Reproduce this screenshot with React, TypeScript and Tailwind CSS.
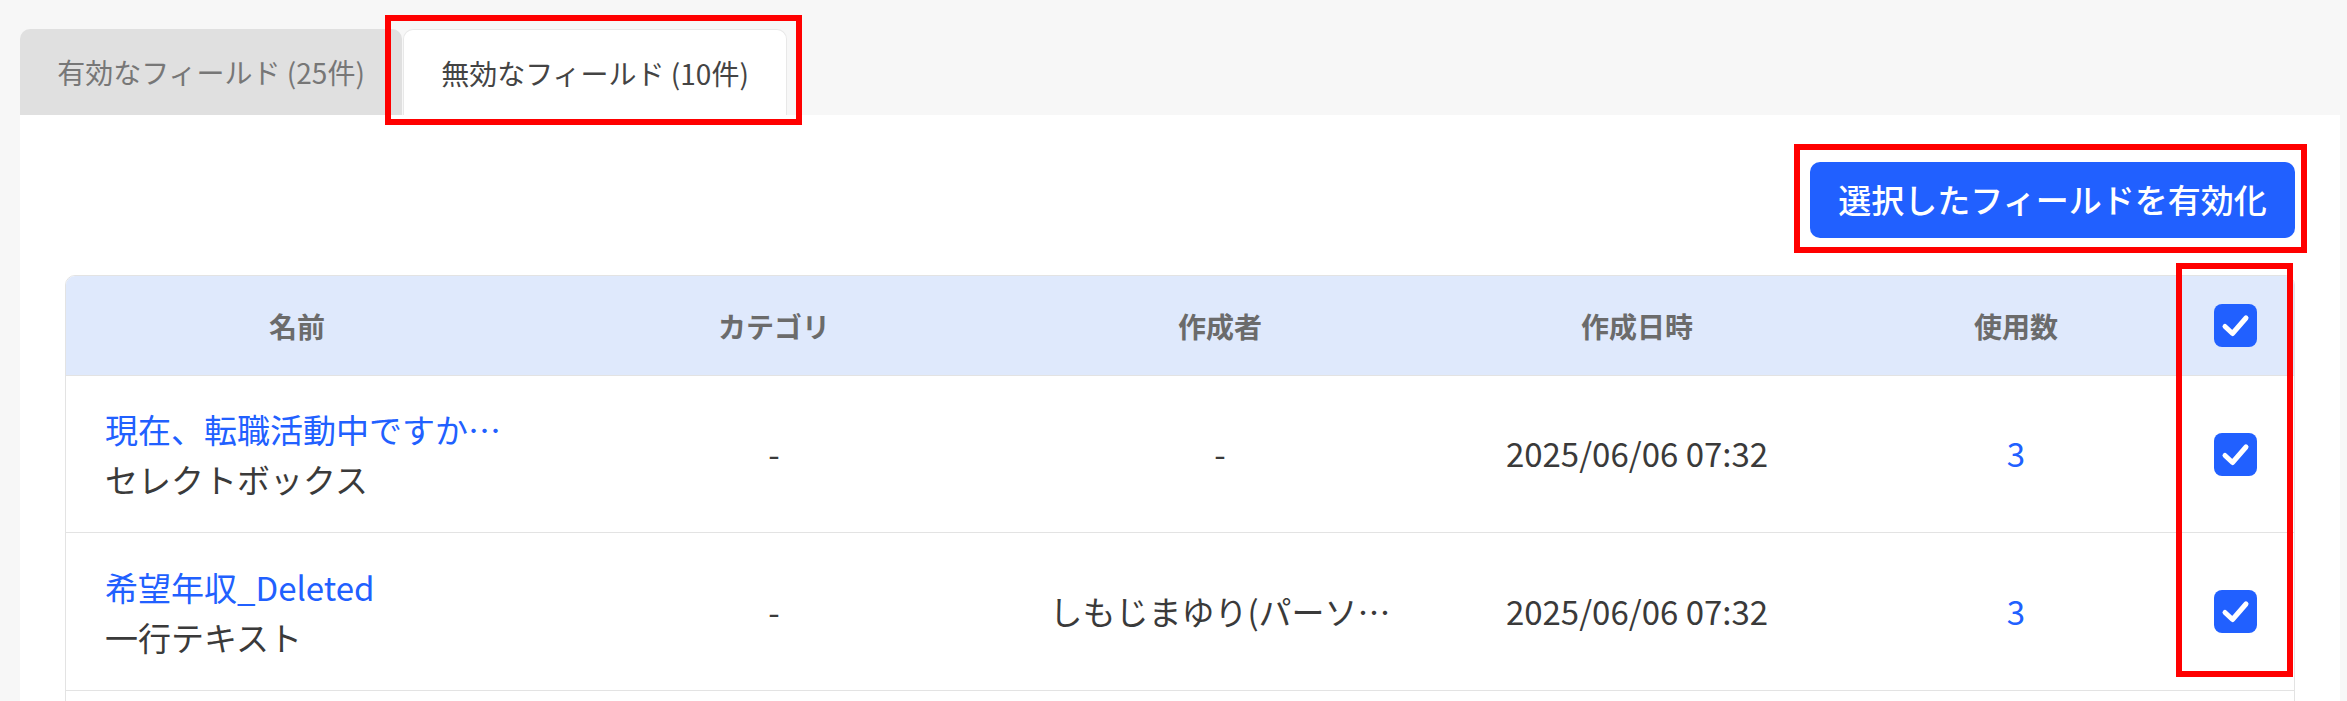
import React from "react";

const font = { fontFamily: '"Noto Sans CJK JP", "Noto Sans", sans-serif' };

interface Row {
  name: string;
  type: string;
  category: string;
  author: string;
  createdAt: string;
  count: number;
  height: string;
}

const rows: Row[] = [
  {
    name: "現在、転職活動中ですか…",
    type: "セレクトボックス",
    category: "-",
    author: "-",
    createdAt: "2025/06/06 07:32",
    count: 3,
    height: "h-[157px]",
  },
  {
    name: "希望年収_Deleted",
    type: "一行テキスト",
    category: "-",
    author: "しもじまゆり(パーソ…",
    createdAt: "2025/06/06 07:32",
    count: 3,
    height: "h-[158px]",
  },
];

const cols = "grid grid-cols-[462px_492px_400px_434px_324px_115px]";

const Checkbox = () => (
  <span className="flex h-[43px] w-[43px] items-center justify-center rounded-[8px] bg-[#2160ff]">
    <svg width="43" height="43" viewBox="0 0 43 43" fill="none">
      <path
        d="M11 22.5 L18.5 29.5 L32 14"
        stroke="#fff"
        strokeWidth="5"
        strokeLinecap="round"
        strokeLinejoin="round"
      />
    </svg>
  </span>
);

const App = () => {
  return (
    <div className="relative h-[701px] w-[2347px] overflow-hidden bg-[#f7f7f7] pt-[29px] pl-[20px]" style={font}>
      {/* tabs */}
      <div className="flex items-end gap-px">
        <div className="flex h-[86px] w-[382px] items-center justify-center rounded-t-[10px] bg-[#e0e0e0] text-[28px] text-[#777777]">
          有効なフィールド (25件)
        </div>
        <div className="flex h-[86px] w-[384px] items-center justify-center rounded-t-[10px] border border-b-0 border-[#e8e8e8] bg-white text-[28px] text-[#444444]">
          無効なフィールド (10件)
        </div>
      </div>

      {/* panel */}
      <div className="h-[600px] w-[2320px] bg-white px-[45px] pt-[47px]">
        <div className="flex justify-end">
          <button className="flex h-[76px] w-[485px] items-center justify-center rounded-[10px] bg-[#2160ff] text-[33px] font-medium text-white">
            選択したフィールドを有効化
          </button>
        </div>

        <div className="mt-[37px] overflow-hidden rounded-t-[10px] border border-[#e3e3e3]">
          <div className={`${cols} h-[100px] items-center border-b border-[#e3e3e3] bg-[#dfe9fc] text-[28px] font-bold text-[#6b6b6b]`}>
            <div className="text-center">名前</div>
            <div className="text-center">カテゴリ</div>
            <div className="text-center">作成者</div>
            <div className="text-center">作成日時</div>
            <div className="text-center">使用数</div>
            <div className="flex justify-center">
              <Checkbox />
            </div>
          </div>

          {rows.map((r) => (
            <div key={r.name} className={`${cols} ${r.height} items-center border-b border-[#e3e3e3] text-[33px] text-[#3a3a3a]`}>
              <div className="pl-[39px] leading-[50px]">
                <div className="text-[#2160ff]">{r.name}</div>
                <div>{r.type}</div>
              </div>
              <div className="text-center">{r.category}</div>
              <div className="text-center">{r.author}</div>
              <div className="text-center">{r.createdAt}</div>
              <div className="text-center text-[#2160ff]">{r.count}</div>
              <div className="flex justify-center">
                <Checkbox />
              </div>
            </div>
          ))}
          <div className="h-[40px]" />
        </div>
      </div>

      {/* annotation boxes */}
      <div className="absolute left-[385px] top-[15px] h-[110px] w-[417px] border-[6px] border-[#ff0000]" />
      <div className="absolute left-[1794px] top-[144px] h-[109px] w-[513px] border-[6px] border-[#ff0000]" />
      <div className="absolute left-[2176px] top-[263px] h-[414px] w-[117px] border-[6px] border-[#ff0000]" />
    </div>
  );
};

export default App;
